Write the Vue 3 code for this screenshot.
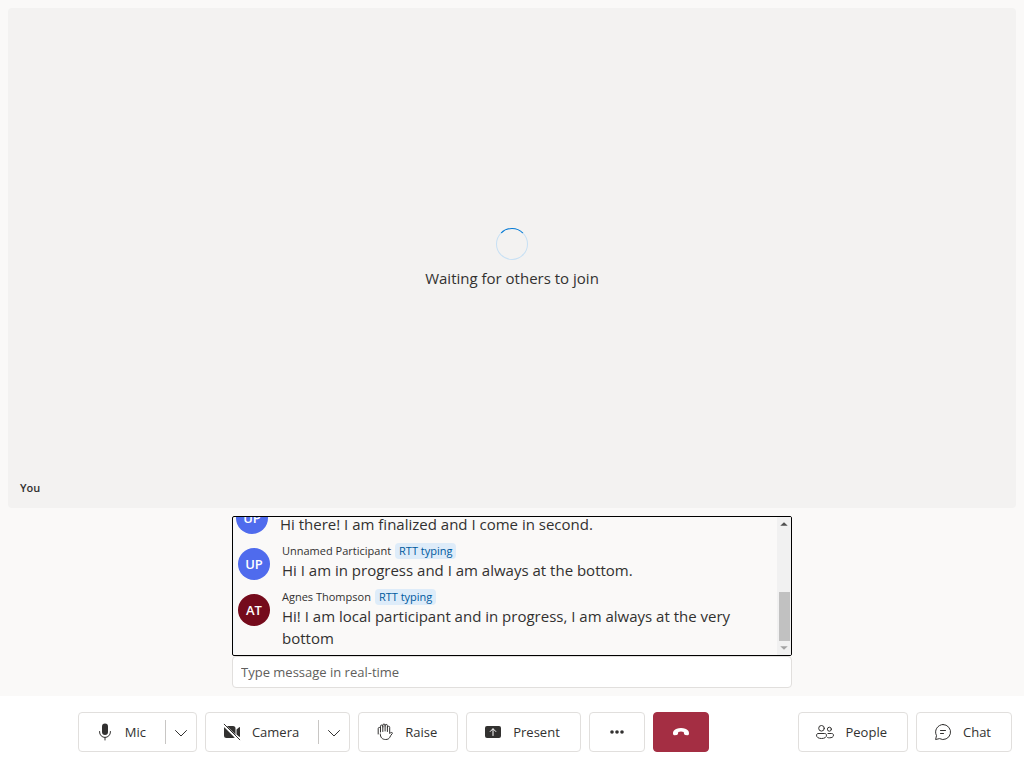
<script setup>
import { ref } from 'vue'

const captions = [
  { id: 1, initials: 'UP', tone: 'blue', text: 'Hi there! I am finalized and I come in second.', typing: false },
  { id: 2, name: 'Unnamed Participant', initials: 'UP', tone: 'blue', text: 'Hi I am in progress and I am always at the bottom.', typing: true },
  { id: 3, name: 'Agnes Thompson', initials: 'AT', tone: 'maroon', text: 'Hi! I am local participant and in progress, I am always at the very bottom', typing: true }
]
const draft = ref('')
</script>

<template>
  <div class="call">
    <main class="stage">
      <section class="tile">
        <div class="waiting">
          <div class="spinner" role="progressbar" aria-label="Waiting"></div>
          <p>Waiting for others to join</p>
        </div>
        <span class="you">You</span>
      </section>
      <section class="rtt">
        <div class="frame" tabindex="0">
          <ul class="captions" aria-label="Captions">
            <li v-for="c in captions" :key="c.id" :class="['caption', { typing: c.typing }]">
              <span :class="['avatar', c.tone]">{{ c.initials }}</span>
              <div class="body">
                <div class="who"><span>{{ c.name }}</span><span v-if="c.typing" class="tag">RTT typing</span></div>
                <p class="msg">{{ c.text }}</p>
              </div>
            </li>
          </ul>
          <div class="scroll" aria-hidden="true">
            <svg viewBox="0 0 15 14"><path d="m3.500 9 4-4 4 4Z" fill="#505050" /></svg>
            <div class="thumb"></div>
            <svg viewBox="0 0 15 14"><path d="m3.500 5 4 4 4-4Z" fill="#a3a3a3" /></svg>
          </div>
        </div>
        <input v-model="draft" class="entry" type="text" aria-label="Real-time message" placeholder="Type message in real-time" />
      </section>
    </main>

    <footer class="bar">
      <div class="group main">
        <div class="split">
          <button class="part" type="button">
            <svg viewBox="0 0 20 20"><rect x="7" y="1.500" width="6" height="11.500" rx="3" fill="currentColor" /><path d="M4.600 9.500v.5a5.400 5.400 0 0 0 10.800 0v-.5M10 15.400V18" class="line" /></svg>
            <span>Mic</span>
          </button>
          <button class="arrow" type="button" aria-label="Microphone options">
            <svg viewBox="0 0 16 16"><path d="M2.500 6.500 8 12l5.500-5.500" class="line" /></svg>
          </button>
        </div>
        <div class="split">
          <button class="part" type="button">
            <svg viewBox="0 0 20 20"><path d="M4.500 4H11a2.500 2.500 0 0 1 2.500 2.500v7A2.500 2.500 0 0 1 11 16H4.500A2.500 2.500 0 0 1 2 13.500v-7A2.500 2.500 0 0 1 4.500 4Zm10 3.400 2.700-2.200c.3-.3.8 0 .8.400v8.800c0 .4-.5.7-.8.400l-2.700-2.200Z" fill="currentColor" /><path d="m2 3 15.500 15.500" stroke="#fff" stroke-width="2.600" /><path d="m2.200 2.200 15.600 15.600" class="line" /></svg>
            <span>Camera</span>
          </button>
          <button class="arrow" type="button" aria-label="Camera options">
            <svg viewBox="0 0 16 16"><path d="M2.500 6.500 8 12l5.500-5.500" class="line" /></svg>
          </button>
        </div>
        <button class="btn" type="button">
          <svg viewBox="0 0 20 20"><path d="M5.500 10V5.500M3.200 12V6.600a1.150 1.150 0 0 1 2.300 0V4.200a1.150 1.150 0 0 1 2.300 0V9.500M7.800 5V3.200a1.150 1.150 0 0 1 2.300 0V9M10.100 4V3.600a1.150 1.150 0 0 1 2.300 0V9.500M12.400 5.400a1.150 1.150 0 0 1 2.300 0V11.500c.7-.8 1.500-1.300 2.500-.9.400.2.400.6.100.9-1.300 1.200-1.700 2.400-2.500 3.800-.8 1.500-2 2.200-4.100 2.200-3.800 0-5.400-2.300-5.400-5.500" class="line" /></svg>
          <span>Raise</span>
        </button>
        <button class="btn" type="button">
          <svg viewBox="0 0 20 20"><rect x="2" y="4" width="16" height="12" rx="2" fill="currentColor" /><path d="M10 13.500V7M7.200 9.500 10 6.700l2.800 2.800" class="line light" /></svg>
          <span>Present</span>
        </button>
        <button class="btn icon" type="button" aria-label="More options">
          <svg viewBox="0 0 20 20" fill="currentColor"><circle cx="5" cy="10" r="1.800" /><circle cx="10" cy="10" r="1.800" /><circle cx="15" cy="10" r="1.800" /></svg>
        </button>
        <button class="btn icon end" type="button" aria-label="Leave call">
          <svg viewBox="0 0 20 20"><path d="M10 6c3.300 0 5.700.9 7 2.500.9 1.100 1.200 2.300.9 3.700-.2.800-.8 1.200-1.600 1.100l-2.100-.4c-.7-.1-1.100-.6-1.200-1.200L12.700 10C11 9.300 9 9.300 7.300 10L7 11.700c-.1.600-.5 1.100-1.200 1.200l-2.100.4c-.8.1-1.400-.3-1.600-1.100-.3-1.400 0-2.600.9-3.700C4.300 6.900 6.700 6 10 6Z" fill="currentColor" /></svg>
        </button>
      </div>
      <div class="group side">
        <button class="btn" type="button">
          <svg viewBox="0 0 20 20"><g class="line"><circle cx="6.500" cy="6.300" r="2.800" /><circle cx="14.400" cy="7.200" r="2" /><path d="M3.300 11.500h6.400c1 0 1.800.7 1.800 1.600 0 2.300-2 3.400-5 3.400s-5-1.100-5-3.400c0-.9.800-1.600 1.800-1.600ZM13 11.500h3.700c1 0 1.800.7 1.800 1.600 0 2-1.700 2.700-4.100 2.700-.6 0-1.200 0-1.700-.2" /></g></svg>
          <span>People</span>
        </button>
        <button class="btn" type="button">
          <svg viewBox="0 0 20 20"><path d="M10 2.500a7.500 7.500 0 1 1-3.500 14.100L2.600 17.500l.9-3.900A7.500 7.500 0 0 1 10 2.500ZM7.500 8.500h5M7.500 11.500h3" class="line" /></svg>
          <span>Chat</span>
        </button>
      </div>
    </footer>
  </div>
</template>

<style>
body { margin: 0; }
</style>

<style scoped>
.call {
  display: flex;
  flex-direction: column;
  height: 100vh;
  background: #faf9f8;
  color: #323130;
  font-family: "Segoe UI", "Open Sans", sans-serif;
  font-size: 13px;
}
.call * { box-sizing: border-box; }
.stage {
  flex: 1;
  min-height: 0;
  display: flex;
  flex-direction: column;
  gap: 8px;
  padding: 8px;
}
.tile {
  position: relative;
  flex: 1;
  display: flex;
  align-items: center;
  justify-content: center;
  background: #f3f2f1;
  border-radius: 4px;
}
.waiting {
  display: flex;
  flex-direction: column;
  align-items: center;
  gap: 8px;
  font-size: 15px;
  line-height: 20px;
}
.waiting p { margin: 0; }
.spinner {
  width: 32px;
  height: 32px;
  border: 1px solid #c7e0f4;
  border-top-color: #0078d4;
  border-radius: 50%;
}
.you {
  position: absolute;
  left: 12px;
  bottom: 12px;
  font-size: 11px;
  font-weight: 600;
  line-height: 16px;
}
.rtt {
  width: 100%;
  max-width: 560px;
  margin: 0 auto;
}
.frame {
  display: flex;
  height: 140px;
  border: 1px solid #000;
  border-radius: 2px;
  overflow: hidden;
}
.captions {
  flex: 1;
  display: flex;
  flex-direction: column;
  justify-content: flex-end;
  margin: 0;
  padding: 0 0 2px;
  list-style: none;
}
.caption {
  display: flex;
  gap: 12px;
  padding: 4px 20px 4px 3px;
}
.caption.typing { border-left: 2px solid #f5f8fb; }
.avatar {
  flex: none;
  width: 32px;
  height: 32px;
  margin-top: 5px;
  border-radius: 50%;
  color: #fff;
  font-size: 13px;
  font-weight: 600;
  line-height: 32px;
  text-align: center;
}
.blue { background: #4f6bed; }
.maroon { background: #750b1c; }
.who {
  display: flex;
  gap: 4px;
  min-height: 16px;
  font-size: 11px;
  line-height: 16px;
}
.tag {
  padding: 0 4px;
  border-radius: 4px;
  background: #deecf9;
  color: #005a9e;
}
.msg {
  margin: 0;
  font-size: 15px;
  line-height: 22px;
}
.scroll {
  flex: none;
  display: flex;
  flex-direction: column;
  width: 14px;
  background: #f1f1f1;
}
.scroll svg { width: 14px; height: 14px; }
.thumb {
  height: 49px;
  margin: auto 1px 0 2px;
  background: #c1c1c1;
}
.entry {
  display: block;
  width: 100%;
  height: 32px;
  padding: 0 8px;
  border: 1px solid #e1dfdd;
  border-radius: 4px;
  background: #fff;
  color: #323130;
  font: inherit;
}
.entry::placeholder { color: #605e5c; opacity: 1; }
.bar {
  display: flex;
  align-items: center;
  padding: 16px 12px 16px 0;
  background: #fff;
}
.group { display: flex; gap: 8px; }
.main { flex: 1; justify-content: center; }
.side { margin-left: 12px; }
button {
  display: flex;
  align-items: center;
  color: #323130;
  font: inherit;
}
.btn, .split {
  height: 40px;
  border: 1px solid #e1dfdd;
  border-radius: 4px;
  background: #fff;
}
.btn { gap: 10px; padding: 0 20px 0 16px; }
.icon { justify-content: center; width: 56px; padding: 0; }
.end { border-color: #a42e43; background: #a42e43; color: #fff; }
.split { display: flex; align-items: center; }
.part {
  gap: 10px;
  height: 100%;
  padding: 0 19px 0 16px;
  border: 0;
  background: none;
}
.arrow {
  justify-content: center;
  width: 31px;
  height: 24px;
  padding: 0;
  border: 0;
  border-left: 1px solid #c8c6c4;
  background: none;
}
svg { flex: none; width: 20px; height: 20px; }
.arrow svg { width: 16px; height: 16px; }
.line {
  fill: none;
  stroke: currentColor;
  stroke-linecap: round;
  stroke-linejoin: round;
}
.light { stroke: #fff; }
</style>
